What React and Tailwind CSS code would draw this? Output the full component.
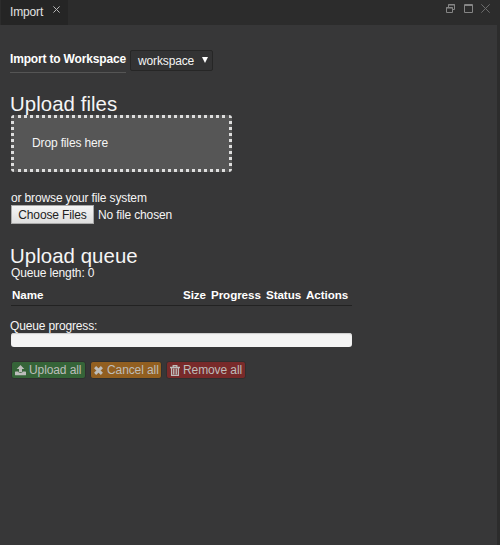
function ActionButton({ className, children }) {
  return (
    <button className={`flex h-[18px] items-center rounded-[3px] border border-[#2f2f2f] text-[12px] leading-[14px] tracking-[-0.1px] whitespace-nowrap text-[#bdbdbb] ${className}`}>
      {children}
    </button>
  );
}

function TitleBar() {
  return (
    <header className="flex h-[25px] justify-between bg-[#2c2c2c]">
      <div className="ml-px flex w-[67px] bg-[#252525] pl-[9px] text-[#e2e2e2]">
        <span className="w-[43px] pt-[5px] text-[12px] leading-[14px] tracking-[-0.15px]">Import</span>
        <svg className="mt-[6px] h-[7px] w-[7px]" viewBox="0 0 7 7" fill="none" stroke="#b8b8b8">
          <path d="M.4.4 6.6 6.6M6.6.4.4 6.6" />
        </svg>
      </div>
      <div className="flex pt-1 pr-[10px] text-[#858585]">
        <svg className="mr-[9px] h-[9px] w-[9px]" viewBox="0 0 9 9" fill="none" stroke="currentColor">
          <path d="M2.5 3V.5h6v5H7M2 1h7M.5 3.5h6v5h-6zM0 4h7" />
        </svg>
        <svg className="mr-2 h-[9px] w-[9px]" viewBox="0 0 9 9" fill="none" stroke="currentColor">
          <path d="M.5.5h8v8h-8zM0 1.5h9" />
        </svg>
        <svg className="h-[9px] w-[9px]" viewBox="0 0 9 9" fill="none" stroke="#6c6c6c">
          <path d="m.3.3 8.4 8.4M8.7.3.3 8.7" />
        </svg>
      </div>
    </header>
  );
}

export default function App() {
  return (
    <div className="flex h-[545px] w-[500px] flex-col overflow-hidden bg-[#2c2c2c] font-['Liberation_Sans',Arial,sans-serif] text-[12px] leading-[14px] tracking-[-0.14px] text-[#f5f5f5]">
      <TitleBar />
      <main className="mr-[3px] flex min-h-0 flex-1 flex-col items-start bg-[#373738] pl-[11px]">
        <div className="mt-[25px] flex h-[24px]">
          <label className="-ml-px mr-1 h-[23px] w-[116px] border-b border-[#555] pt-[2px] text-[12px] font-bold tracking-[-0.17px] whitespace-nowrap text-white">Import to Workspace</label>
          <div className="flex h-[21px] w-[83px] items-center justify-between rounded-[2px] border border-[#262626] bg-[#333334] pr-[4px] pl-[7px]">
            <span>workspace</span>
            <svg className="mb-[2px] h-[6px] w-[6px]" viewBox="0 0 6 6" fill="#fff"><path d="M0 0h6L3 6z" /></svg>
          </div>
        </div>
        <h1 className="-ml-px mt-[20px] h-[21px] text-[20.4px] leading-[20px] tracking-[0.06px]">Upload files</h1>
        <div className="h-[57px] w-[221px] rounded-[3px] border-[3px] border-dotted border-[#dedede] bg-[#565656] pt-[18px] pl-[18px]">Drop files here</div>
        <p className="mt-[19px]">or browse your file system</p>
        <div className="flex h-[19px] items-center">
          <button className="mr-1 h-[19px] w-[83px] border border-[#aaa] bg-linear-to-b from-[#f5f5f5] to-[#dedede] text-[12px] leading-[16px] tracking-[-0.14px] whitespace-nowrap text-[#222]">Choose Files</button>
          <span>No file chosen</span>
        </div>
        <h2 className="-ml-px mt-[22px] h-[20px] text-[20.4px] leading-[20px] tracking-[0.06px]">Upload queue</h2>
        <p>Queue length: 0</p>
        <div className="mt-[8px] flex h-[18px] w-[341px] border-b border-[#222] pl-[1px] text-[11.6px] font-bold tracking-[-0.06px] text-white">
          <span className="w-[171px]">Name</span>
          <span className="w-[28px]">Size</span>
          <span className="w-[55px]">Progress</span>
          <span className="w-[40px]">Status</span>
          <span>Actions</span>
        </div>
        <p className="-ml-px mt-[13px]">Queue progress:</p>
        <div className="h-[14px] w-[341px] rounded-[3px] bg-[#f4f4f4] shadow-[inset_0_1px_1px_#ccc]" />
        <div className="mt-[14px] flex gap-[4px]">
          <ActionButton className="w-[75px] bg-[#356438] pl-[3px]">
            <svg className="mr-[3px] h-[11px] w-[11px]" viewBox="0 0 11 11" fill="currentColor">
              <path d="M5.5 0 9.3 4H7v3.2H4V4H1.7zM.6 6.5h2.8c.2 1 .7 1.4 1.4 1.4h1.4c.7 0 1.2-.4 1.4-1.4h2.8q.6 0 .6.6v2.6q0 .6-.6.6H.6q-.6 0-.6-.6V7.1q0-.6.6-.6z" />
            </svg>
            Upload all
          </ActionButton>
          <ActionButton className="w-[72px] bg-[#925f20] pl-[3px]">
            <svg className="mr-[4px] h-[9px] w-[9px]" viewBox="0 0 9 9" fill="none" stroke="currentColor" strokeWidth="2.9">
              <path d="m1.1 1.1 6.8 6.8M7.9 1.1 1.1 7.9" />
            </svg>
            Cancel all
          </ActionButton>
          <ActionButton className="w-[80px] bg-[#782a2a] pl-[3px]">
            <svg className="mr-[3px] h-[11px] w-[10px]" viewBox="0 0 10 11" fill="none" stroke="currentColor">
              <path d="M0 2.5h10M3.2 2V.7h3.6V2M1.6 2.5v7.8h6.8V2.5" strokeWidth="1.3" />
              <path d="M3.5 3.5v6M5 3.5v6M6.5 3.5v6" strokeWidth=".9" />
            </svg>
            Remove all
          </ActionButton>
        </div>
      </main>
    </div>
  );
}
